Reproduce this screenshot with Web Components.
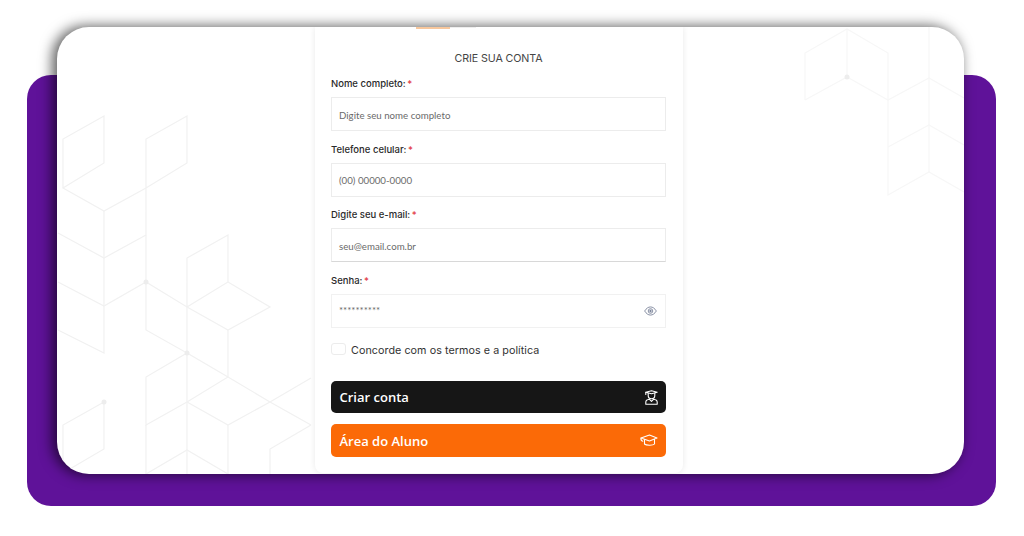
<!DOCTYPE html>
<html lang="pt-BR"><head><meta charset="utf-8"><title>Crie sua conta</title>
<style>
html,body{margin:0;padding:0;background:#fff;width:1024px;height:536px;overflow:hidden}
body{font-family:"Inter","Liberation Sans",sans-serif}
</style></head><body>
<signup-stage>
  <signup-card>
    <form-field label="Nome completo:" value="Digite seu nome completo"></form-field>
    <form-field label="Telefone celular:" value="(00) 00000-0000"></form-field>
    <form-field label="Digite seu e-mail:" value="seu@email.com.br" strong></form-field>
    <form-field label="Senha:" value="**********" eye></form-field>
    <terms-check>Concorde com os termos e a política</terms-check>
    <action-button tone="dark" icon="student" slot="actions">Criar conta</action-button>
    <action-button tone="orange" icon="cap" slot="actions">Área do Aluno</action-button>
  </signup-card>
</signup-stage>
<script>
const def=(n,html,extra)=>{customElements.define(n,class extends HTMLElement{
  constructor(){super();this.attachShadow({mode:'open'}).innerHTML=html;}
  connectedCallback(){extra&&extra(this,this.shadowRoot);}
});};
const L=(pts)=>`<polyline points="${pts}"/>`;
const lines=[
 '63,188 63,139 104,116 104,163 63,188 104,211 146,188 187,163 187,116 146,139 146,282',
 '104,211 104,353 58,330','58,233 104,258 146,235','58,282 104,306 146,282 187,307 187,258 228,235 228,282 187,307 228,330 270,307 228,282',
 '146,282 146,330 187,353 187,474','187,307 187,353','228,330 228,377 187,402 146,425 146,377 187,353 228,377 270,402 311,425',
 '146,425 146,474','187,402 228,425 270,402 311,378','228,425 228,474','146,474 187,450 228,474','270,474 270,449 311,425',
 '63,474 63,425 104,402 104,449 63,473'
].map(L).join('');
const rlines=[
 '805,100 805,53 847,29 888,53 888,195 929,172 964,192','805,100 847,77 888,100 929,78 964,98','847,29 847,77','888,147 929,125 964,145','929,27 929,172'
].map(L).join('');
def('signup-stage',`<style>
:host{display:grid;width:1024px;height:536px;grid-template:1fr/1fr}
.purple{grid-area:1/1;margin:75px 28px 30px 27px;background:#5f1299;border-radius:24px}
.panel{grid-area:1/1;margin:27px 60px 62px 57px;background:#fff;border-radius:32px;overflow:hidden;
 box-shadow:-4px 0 13px 1px rgba(0,0,0,.62);position:relative;display:flex;padding-left:258px}
svg{position:absolute;left:0;top:0;width:907px;height:447px;fill:none;stroke-width:1.2}
.a{stroke:#f1f1f1}.b{stroke:#f7f7f7}
circle{fill:#ededed;stroke:none}
</style>
<div class="purple"></div>
<div class="panel">
<svg viewBox="57 27 907 447" aria-hidden="true"><g class="a">${lines}<circle cx="146" cy="282" r="2.500"/><circle cx="187" cy="353" r="2.500"/><circle cx="104" cy="402" r="2.500"/></g><g class="b">${rlines}<circle cx="847" cy="77" r="2.500"/></g></svg>
<slot></slot></div>`);
def('signup-card',`<style>
:host{display:block;position:relative;width:368px;height:446px;box-sizing:border-box;background:#fff;border-radius:0 0 8px 8px;
 box-shadow:0 0 6px rgba(0,0,0,.09);padding:0 17px 0 16px}
.tabs{display:flex;height:2px;margin-left:85px}
.tabs i{display:block;width:34px;height:2px;background:#f8c79c}
.tabs b{display:block;width:26px;height:1px;background:#eee}
h1{margin:0;padding:23px 0 12px;font:400 10.700px/13px "Inter","Liberation Sans",sans-serif;letter-spacing:-.1px;color:#444;text-align:center;height:13px}
.fields{display:flex;flex-direction:column}
.act{display:flex;flex-direction:column;gap:11px;margin-top:22px}
</style>
<div class="tabs"><i></i><b></b></div>
<h1>CRIE SUA CONTA</h1>
<div class="fields"><slot></slot></div>
<div class="act"><slot name="actions"></slot></div>`);
def('form-field',`<style>
:host{display:block;height:65.7px}
.l{font:500 9.5px/13px "Inter","Liberation Sans",sans-serif;color:#2a2a2a;height:13px;padding-bottom:7px;white-space:nowrap}
.l em{font-style:normal;color:#e2383f;margin-left:-1px}
.box{height:34px;box-sizing:border-box;border:1px solid #ececec;display:flex;align-items:center;justify-content:space-between;padding:1px 8px 0 7px;background:#fff}
.v{font:400 9.700px/12px "Lato","Liberation Sans",sans-serif;color:#6a6a6a}
svg{display:none;width:13px;height:10px}
</style>
<div class="l"><span id="l"></span> <em>*</em></div>
<div class="box"><span class="v" id="v"></span>
<svg viewBox="0 0 16 12" fill="none" stroke="#6e7890" stroke-width="1"><path d="M.8 6C3 2.6 5.300 1 8 1s5 1.600 7.200 5C13 9.400 10.700 11 8 11S3 9.400 .8 6z"/><circle cx="8" cy="6" r="2.800"/><circle cx="8" cy="6" r="1" fill="#6e7890"/></svg></div>`,
(h,s)=>{s.getElementById('l').textContent=h.getAttribute('label');s.getElementById('v').textContent=h.getAttribute('value');
 if(h.hasAttribute('eye')){s.querySelector('svg').style.display='block';s.querySelector('.box').style.paddingTop='0';s.querySelector('.box').style.borderColor='#f1f1f1';s.getElementById('v').style.marginTop='-3px';}
 if(h.hasAttribute('strong'))s.querySelector('.box').style.borderBottomColor='#d8d8d8';});
def('terms-check',`<style>
:host{display:flex;align-items:center;gap:5px;height:16px;margin-top:3px;font:400 10.750px/16px "Inter","Liberation Sans",sans-serif;color:#333;letter-spacing:.05px}
i{display:block;width:15px;height:12px;box-sizing:border-box;border:1px solid #ececec;border-radius:3px;margin-top:-4px}
</style><i></i><span><slot></slot></span>`);
const icons={
 student:`<svg viewBox="0 0 13 15" fill="none" stroke="#fff" stroke-width="1.100" stroke-linejoin="round" stroke-linecap="round"><path d="M.8 2.200 6.500.8l5.700 1.400L6.500 3.800z"/><path d="M3.200 3.200V5.400a3.300 3.300 0 0 0 6.600 0V3.200"/><path d="M.8 2.400V4.500"/><path d="M.8 14.200v-2C.8 10.500 2.600 9.500 4.600 9.300L6.500 11.400l1.900-2.100c2 .2 3.800 1.200 3.800 2.900v2z"/></svg>`,
 cap:`<svg viewBox="0 0 18 13" fill="none" stroke="#fff" stroke-width="1.100" stroke-linejoin="round" stroke-linecap="round"><path d="M1 4 9.500 1 17 4 9.500 7z"/><path d="M4.500 5.600V10c1.500 1.600 8.500 1.800 10 0V5.400"/><path d="M1 4c-.2 1.500 0 2.800 1.800 3.200"/></svg>`};
def('action-button',`<style>
:host{display:flex;align-items:center;justify-content:space-between;height:32.500px;box-sizing:border-box;padding:0 8px 0 8.500px;border-radius:5px;
 font:600 13px/16px "Open Sans","Liberation Sans",sans-serif;color:#fff}
:host([tone=dark]){background:#161616}
:host([tone=orange]){background:#fb6a07}
.i{display:flex;width:18px;justify-content:flex-end}
:host([tone=dark]) svg{width:13px;height:15px}
:host([tone=orange]) svg{width:18px;height:13px}
</style><span><slot></slot></span><span class="i" id="i"></span>`,
(h,s)=>{s.getElementById('i').innerHTML=icons[h.getAttribute('icon')];});
</script>
</body></html>
